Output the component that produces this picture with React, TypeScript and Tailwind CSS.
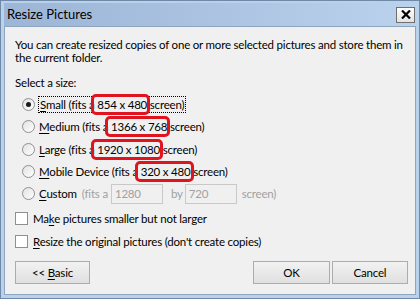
import React from "react";

const font = { fontFamily: 'Lato, "Noto Sans", sans-serif' };

function Radio({ checked }: { checked?: boolean }) {
  return (
    <span className="w-[13px] h-[13px] rounded-full border border-[#8f8f8f] bg-gradient-to-br from-[#e2e2e2] to-white flex items-center justify-center shrink-0">
      {checked && <span className="w-[5px] h-[5px] rounded-full bg-[#1a1a1a]" />}
    </span>
  );
}

function Check() {
  return <span className="w-[13px] h-[13px] border border-[#8f8f8f] bg-white shrink-0" />;
}

function U({ children }: { children: React.ReactNode }) {
  return <span className="underline underline-offset-2">{children}</span>;
}

// red hand-drawn annotation around the resolution
function Hl({ children }: { children: React.ReactNode }) {
  return (
    <span className="relative">
      {children}
      <span className="absolute -left-[6px] -right-[3px] -top-[4px] -bottom-[4px] border-[3px] border-[#e0141e] rounded-[5px] pointer-events-none" />
    </span>
  );
}

function Btn({ children, className }: { children: React.ReactNode; className: string }) {
  return (
    <button className={`h-[23px] border border-[#acacac] bg-gradient-to-b from-[#f2f2f2] to-[#e0e0e0] text-[11.5px] text-black ${className}`}>
      {children}
    </button>
  );
}

export default function App() {
  return (
    <div className="w-[420px] h-[299px] bg-[#6f8aa8] p-[1px]" style={font}>
      <div className="h-full bg-[#b9d1ea] px-[3px] pb-[3px] flex flex-col">
        <div className="h-[23px] mt-[2px] flex items-center justify-between bg-gradient-to-r from-[#9db5d6] to-[#bad2ec] pl-[3px] pr-[1px]">
          <span className="text-[13px] text-black leading-none">Resize Pictures</span>
          <span className="w-[19px] h-[16px] border border-[#6f6f6f] bg-gradient-to-b from-white to-[#e3e3e3] flex items-center justify-center">
            <svg width="10" height="9" viewBox="0 0 10 9">
              <path d="M1 0.5 L9 8.5 M9 0.5 L1 8.5" stroke="#000" strokeWidth="2.2" />
            </svg>
          </span>
        </div>
        <div className="flex-1 bg-[#f0f0f0] border border-[#8ea4bf] pl-[10px] pr-[4px] pt-[11px] text-[11.5px] tracking-[-0.2px] text-black leading-[13px]">
          <p className="whitespace-nowrap">
            You can create resized copies of one or more selected pictures and store them in
            <br />
            the current folder.
          </p>
          <p className="mt-[12px]">Select a size:</p>
          <div className="mt-[4px] ml-[7px] flex flex-col">
            <div className="h-[22px] flex items-center gap-[3px]">
              <Radio checked />
              <span className="border border-dotted border-black px-[1px] py-[1px]">
                <U>S</U>mall (fits a <Hl>854 x 480</Hl> screen)
              </span>
            </div>
            <div className="h-[23px] flex items-center gap-[4px]">
              <Radio />
              <span>
                <U>M</U>edium (fits a <Hl>1366 x 768</Hl> screen)
              </span>
            </div>
            <div className="h-[22px] flex items-center gap-[4px]">
              <Radio />
              <span>
                <U>L</U>arge (fits a <Hl>1920 x 1080</Hl> screen)
              </span>
            </div>
            <div className="h-[22px] flex items-center gap-[4px]">
              <Radio />
              <span>
                <U>M</U>obile Device (fits a <Hl>320 x 480</Hl> screen)
              </span>
            </div>
            <div className="h-[23px] flex items-center">
              <Radio />
              <span className="ml-[4px]">
                <U>C</U>ustom
              </span>
              <span className="text-[#a0a0a0] ml-[5px]">(fits a</span>
              <span className="ml-[3px] w-[52px] h-[20px] border border-[#c9c9c9] bg-[#f0f0f0] text-[#a0a0a0] px-[3px] flex items-center">1280</span>
              <span className="text-[#a0a0a0] ml-[8px]">by</span>
              <span className="ml-[2px] w-[52px] h-[20px] border border-[#c9c9c9] bg-[#f0f0f0] text-[#a0a0a0] px-[3px] flex items-center">720</span>
              <span className="text-[#a0a0a0] ml-[5px]">screen)</span>
            </div>
          </div>
          <div className="mt-[2px] flex flex-col">
            <div className="h-[23px] flex items-center gap-[5px]">
              <Check />
              <span>
                Ma<U>k</U>e pictures smaller but not larger
              </span>
            </div>
            <div className="h-[23px] flex items-center gap-[5px]">
              <Check />
              <span>
                <U>R</U>esize the original pictures (don't create copies)
              </span>
            </div>
          </div>
          <div className="mt-[8px] mr-[2px] flex items-center">
            <Btn className="w-[75px]">
              <span>{"<< "}</span>
              <U>B</U>
              <span>asic</span>
            </Btn>
            <div className="flex-1" />
            <Btn className="w-[77px] mr-[2px]">OK</Btn>
            <Btn className="w-[76px] mr-[1px]">Cancel</Btn>
          </div>
        </div>
      </div>
    </div>
  );
}
